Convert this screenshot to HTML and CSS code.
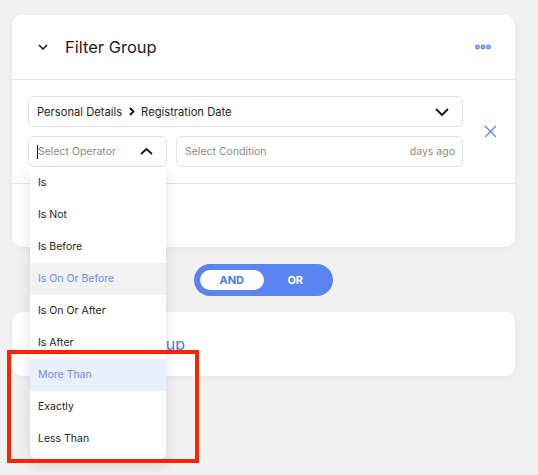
FILE: index.html
```html
<!DOCTYPE html>
<html lang="en">
<head>
  <meta charset="UTF-8">
  <meta name="viewport" content="width=device-width, initial-scale=1.0">
  <title>Filter Group</title>
  <link rel="stylesheet" href="styles.css">
</head>
<body>
  <div class="page">
    <div class="card">
      <div class="card-head">
        <svg class="head-chevron" width="10" height="6" viewBox="0 0 10 6"><path d="M1 1l4 4 4-4" fill="none" stroke="#222" stroke-width="1.6"/></svg>
        <span class="title">Filter Group</span>
        <svg class="dots" width="16" height="6" viewBox="0 0 16 6"><circle cx="2.5" cy="3" r="1.8" fill="#a9bff7" stroke="#5b83f1" stroke-width="1.2"/><circle cx="8" cy="3" r="1.8" fill="#a9bff7" stroke="#5b83f1" stroke-width="1.2"/><circle cx="13.5" cy="3" r="1.8" fill="#a9bff7" stroke="#5b83f1" stroke-width="1.2"/></svg>
      </div>

      <div class="card-body">
        <div class="rows">
          <div class="field field-path">
            <span>Personal Details</span>
            <svg class="crumb" width="6" height="9" viewBox="0 0 6 9"><path d="M1 1l3.5 3.5L1 8" fill="none" stroke="#111" stroke-width="1.8"/></svg>
            <span>Registration Date</span>
            <svg class="field-chevron" width="14" height="8" viewBox="0 0 14 8"><path d="M1 1l6 6 6-6" fill="none" stroke="#111" stroke-width="1.8"/></svg>
          </div>
          <div class="row">
            <div class="operator">
              <div class="field field-op">
                <span class="cursor"></span>
                <span class="placeholder">Select Operator</span>
                <svg class="field-chevron" width="13" height="7" viewBox="0 0 13 7"><path d="M1 6l5.5-5 5.5 5" fill="none" stroke="#111" stroke-width="1.8"/></svg>
              </div>
              <!-- Operator dropdown -->
              <ul class="dropdown">
                <li>Is</li>
                <li>Is Not</li>
                <li>Is Before</li>
                <li class="hover">Is On Or Before</li>
                <li>Is On Or After</li>
                <li>Is After</li>
                <li class="selected">More Than</li>
                <li>Exactly</li>
                <li>Less Than</li>
              </ul>
            </div>
            <div class="field field-cond">
              <span class="placeholder">Select Condition</span>
              <span class="suffix">days ago</span>
            </div>
          </div>
        </div>
        <svg class="remove" width="13" height="13" viewBox="0 0 13 13"><path d="M1 1l11 11M12 1L1 12" stroke="#5b83f1" stroke-width="1.3"/></svg>
      </div>
      <div class="card-foot"></div>
    </div>

    <div class="toggle">
      <span class="toggle-opt active">AND</span>
      <span class="toggle-opt">OR</span>
    </div>

    <div class="card add-card">
      <span class="add-link">Add Filter Group</span>
    </div>
  </div>

  <div class="highlight"></div>
</body>
</html>
```

FILE: styles.css
```css
html, body {
  min-height: 475px;
}
body {
  margin: 0;
  background-color: #f1f1f1;
  font-family: Inter, "Noto Sans", sans-serif;
  color: #1e1e1e;
}
.page {
  padding: 15px 23px 0 12px;
  min-height: 460px;
}
.card {
  background-color: #fff;
  border-radius: 10px;
  box-shadow: 0 2px 6px rgba(0, 0, 0, 0.04);
}
.card-head {
  height: 64px;
  display: flex;
  align-items: center;
  padding: 0 24px 0 26px;
  border-bottom: 1px solid #e5e5e5;
}
.head-chevron {
  margin-right: 17px;
}
.title {
  font-size: 16.5px;
  flex: 1;
}
.card-body {
  display: flex;
  align-items: center;
  padding: 16px 0 16px 16px;
  border-bottom: 1px solid #e5e5e5;
}
.rows {
  width: 435px;
  display: flex;
  flex-direction: column;
  gap: 9px;
}
.row {
  display: flex;
  gap: 9px;
}
.field {
  height: 31px;
  box-sizing: border-box;
  border: 1px solid #e3e3e3;
  border-radius: 6px;
  display: flex;
  align-items: center;
  padding: 0 13px 0 8px;
  font-size: 10.5px;
}
.field-path {
  font-size: 11.2px;
}
.crumb {
  margin: 0 6px 0 7px;
}
.field-chevron {
  margin-left: auto;
}
.operator {
  position: relative;
  width: 139px;
}
.cursor {
  width: 1px;
  height: 14px;
  background-color: #111;
}
.placeholder {
  color: #8b8b8b;
}
.field-cond {
  flex: 1;
  padding-right: 7px;
}
.suffix {
  margin-left: auto;
  color: #8b8b8b;
}
.remove {
  margin-left: 21px;
}
.card-foot {
  height: 63px;
}
.dropdown {
  position: absolute;
  top: 100%;
  left: 2px;
  width: 136px;
  margin: 0;
  padding: 0 0 4px;
  list-style: none;
  background-color: #fff;
  border-radius: 0 0 6px 6px;
  box-shadow: 0 6px 14px rgba(0, 0, 0, 0.12);
  z-index: 2;
}
.dropdown li {
  height: 32px;
  line-height: 32px;
  padding-left: 8px;
  font-size: 10.5px;
}
.dropdown li.hover {
  background-color: #f2f2f2;
  color: #6b8df2;
}
.dropdown li.selected {
  background-color: #e8effd;
  color: #6b8df2;
}
.toggle {
  width: 139px;
  height: 32px;
  box-sizing: border-box;
  margin: 17px auto 16px;
  padding: 6px;
  border-radius: 16px;
  background-color: #5a84f2;
  display: flex;
  align-items: center;
}
.toggle-opt {
  width: 64px;
  height: 20px;
  line-height: 20px;
  text-align: center;
  border-radius: 10px;
  font-size: 11px;
  font-weight: 700;
  color: #fff;
}
.toggle-opt.active {
  background-color: #fff;
  color: #4d78e6;
}
.add-card {
  height: 64px;
  display: flex;
  align-items: center;
  padding-left: 49px;
}
.add-link {
  color: #4d78e6;
  font-size: 16px;
}
.highlight {
  position: absolute;
  left: 7px;
  top: 350px;
  width: 192px;
  height: 113px;
  box-sizing: border-box;
  border: 4px solid #ff2200;
  z-index: 5;
}
```
